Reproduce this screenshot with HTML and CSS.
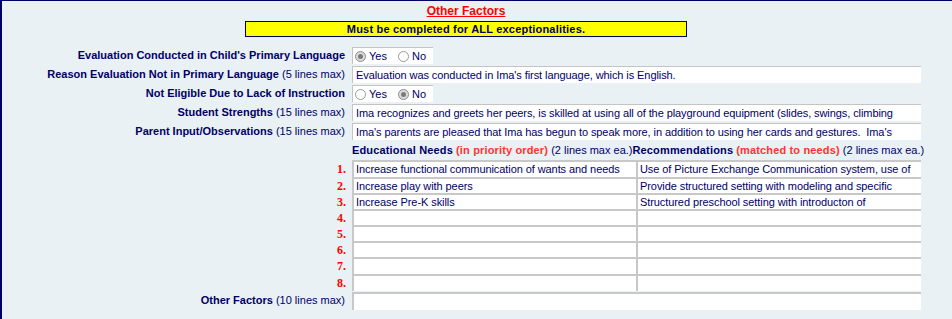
FILE: index.html
```html
<!DOCTYPE html>
<html lang="en">
  <head>
    <meta charset="UTF-8" />
    <title>Other Factors</title>
    <link rel="stylesheet" href="styles.css">
  </head>
  <body>
    <section class="panel">
      <div class="top">
        <h2 class="title">Other Factors</h2>
        <div class="notice">Must be completed for ALL exceptionalities.</div>
      </div>

      <div class="form">
        <label class="lbl"><b>Evaluation Conducted in Child's Primary Language</b></label>
        <div class="field radios">
          <span class="radio on"></span>Yes
          <span class="radio"></span>No
        </div>

        <label class="lbl"><b>Reason Evaluation Not in Primary Language</b> (5 lines max)</label>
        <div class="field">Evaluation was conducted in Ima's first language, which is English.</div>

        <label class="lbl"><b>Not Eligible Due to Lack of Instruction</b></label>
        <div class="field radios">
          <span class="radio"></span>Yes
          <span class="radio on"></span>No
        </div>

        <label class="lbl"><b>Student Strengths</b> (15 lines max)</label>
        <div class="field">Ima recognizes and greets her peers, is skilled at using all of the playground equipment (slides, swings, climbing</div>

        <label class="lbl"><b>Parent Input/Observations</b> (15 lines max)</label>
        <div class="field">Ima's parents are pleased that Ima has begun to speak more, in addition to using her cards and gestures.&nbsp; Ima's</div>

        <div></div>
        <div class="needs-head">
          <span class="head-l"><b>Educational Needs</b> <b class="red">(in priority order)</b> (2 lines max ea.)</span>
          <span class="head-r"><b>Recommendations</b> <b class="red">(matched to needs)</b> (2 lines max ea.)</span>
        </div>

        <div class="nums">
          <span>1.</span><span>2.</span><span>3.</span><span>4.</span>
          <span>5.</span><span>6.</span><span>7.</span><span>8.</span>
        </div>
        <div class="needs">
          <div class="cell">Increase functional communication of wants and needs</div>
          <div class="cell">Use of Picture Exchange Communication system, use of</div>
          <div class="cell">Increase play with peers</div>
          <div class="cell">Provide structured setting with modeling and specific</div>
          <div class="cell">Increase Pre-K skills</div>
          <div class="cell">Structured preschool setting with introducton of</div>
          <div class="cell"></div><div class="cell"></div>
          <div class="cell"></div><div class="cell"></div>
          <div class="cell"></div><div class="cell"></div>
          <div class="cell"></div><div class="cell"></div>
          <div class="cell"></div><div class="cell"></div>
        </div>

        <label class="lbl last"><b>Other Factors</b> (10 lines max)</label>
        <div class="field tall"></div>
      </div>
    </section>
  </body>
</html>
```

FILE: styles.css
```css
* {
  margin: 0;
  padding: 0;
  box-sizing: border-box;
}
body {
  width: 952px;
  height: 319px;
  overflow: hidden;
  background: #e9f1f4;
  font-family: "Liberation Sans", Arial, sans-serif;
  font-size: 11px;
  color: #000066;
}
.panel {
  height: 319px;
  border-top: 1px solid #000066;
  border-left: 2px solid #000066;
  padding-top: 3px;
}
.top {
  width: 928px;
}
.title {
  text-align: center;
  font-size: 12px;
  color: #ff0000;
  text-decoration: underline;
  line-height: 14px;
}
.notice {
  width: 442px;
  height: 16px;
  margin: 3px auto 0;
  background: #ffff00;
  border: 1px solid #000066;
  text-align: center;
  font-weight: bold;
  letter-spacing: 0.2px;
  line-height: 14px;
}
.form {
  display: grid;
  grid-template-columns: 350px 569px;
  row-gap: 2px;
  margin-top: 10px;
}
.lbl {
  text-align: right;
  padding-right: 7px;
  line-height: 17px;
  white-space: nowrap;
}
.field {
  height: 17px;
  background: #fff;
  border-top: 1px solid #c4c4c4;
  border-left: 1px solid #c4c4c4;
  padding-left: 3px;
  line-height: 16px;
  letter-spacing: -0.08px;
  white-space: nowrap;
  overflow: hidden;
}
.radios {
  width: 81px;
  display: flex;
  align-items: center;
  padding-left: 2px;
  letter-spacing: 0;
}
.radio {
  width: 11px;
  height: 11px;
  border: 1px solid #9a9a9a;
  border-radius: 50%;
  background: #fff;
  margin: 0 3px 0 0;
  display: flex;
  align-items: center;
  justify-content: center;
}
.radios .radio:nth-of-type(2) {
  margin-left: 11px;
}
.radio.on {
  background: #dcdcdc;
  border-color: #8c8c8c;
}
.radio.on::after {
  content: "";
  width: 5px;
  height: 5px;
  border-radius: 50%;
  background: #7a7a7a;
}
.needs-head {
  display: flex;
  height: 16px;
  align-items: center;
  white-space: nowrap;
}
.needs-head b {
  letter-spacing: 0.15px;
}
.head-l {
  width: 284px;
}
.red {
  color: #ff3333;
}
.nums {
  display: grid;
  grid-template-rows: 17px repeat(5, 16px) 17px 17px;
  justify-items: end;
  padding-right: 6px;
  font-family: "Liberation Serif", "Times New Roman", serif;
  font-weight: bold;
  font-size: 12px;
  color: #ff0000;
  line-height: 18px;
}
.needs {
  display: grid;
  grid-template-columns: 284px 285px;
  grid-template-rows: 17px repeat(5, 16px) 17px 17px;
}
.cell {
  background: #fff;
  border-top: 2px solid #c8c8c8;
  border-left: 2px solid #c8c8c8;
  padding-left: 2px;
  line-height: 14px;
  letter-spacing: -0.08px;
  white-space: nowrap;
  overflow: hidden;
}
.last,
.tall {
  margin-top: -1px;
}
.tall {
  height: 18px;
  border-top: 2px solid #c8c8c8;
  border-left: 2px solid #c8c8c8;
}
```
